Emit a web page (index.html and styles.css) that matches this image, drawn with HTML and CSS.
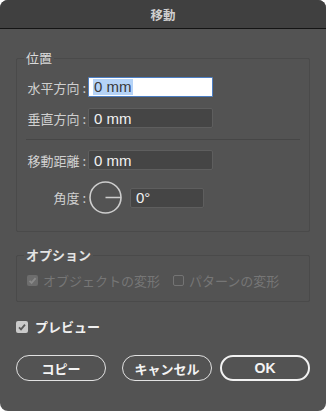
FILE: index.html
```html
<!DOCTYPE html>
<html>
<head>
  <meta charset="utf-8">
  <title>移動</title>
  <link rel="stylesheet" href="styles.css">
</head>
<body>
  <div class="window">
    <div class="titlebar">移動</div>

    <div class="content">
      <!-- 位置 -->
      <fieldset class="group position">
        <legend>位置</legend>

        <div class="row">
          <label class="label">水平方向 :</label>
          <div class="field focused"><span class="sel">0 mm</span></div>
        </div>

        <div class="row">
          <label class="label">垂直方向 :</label>
          <div class="field">0 mm</div>
        </div>

        <div class="divider"></div>

        <div class="row">
          <label class="label">移動距離 :</label>
          <div class="field">0 mm</div>
        </div>

        <div class="row angle-row">
          <label class="label">角度 :</label>
          <svg class="dial" width="33" height="33" viewBox="0 0 33 33">
            <circle cx="16.5" cy="16.5" r="15.5" fill="none" stroke="#cdcdcd" stroke-width="1.6"/>
            <line x1="16.5" y1="16.5" x2="32" y2="16.5" stroke="#cdcdcd" stroke-width="1.6"/>
          </svg>
          <div class="field small">0°</div>
        </div>
      </fieldset>

      <!-- オプション -->
      <fieldset class="group options">
        <legend>オプション</legend>
        <div class="checks">
          <span class="check disabled checked">
            <span class="box"><svg width="11" height="11" viewBox="0 0 11 11"><path d="M2.5 5.8 L4.6 7.9 L8.6 3.2" fill="none" stroke="#8a8a8a" stroke-width="1.8"/></svg></span>
            オブジェクトの変形
          </span>
          <span class="check disabled">
            <span class="box empty"></span>
            パターンの変形
          </span>
        </div>
      </fieldset>

      <div class="preview">
        <span class="check checked">
          <span class="box light"><svg width="12" height="12" viewBox="0 0 12 12"><path d="M3 6.3 L5 8.3 L9 3.6" fill="none" stroke="#5a5a5a" stroke-width="1.8"/></svg></span>
          プレビュー
        </span>
      </div>

      <div class="buttons">
        <button class="btn">コピー</button>
        <div class="btn-group">
          <button class="btn">キャンセル</button>
          <button class="btn primary">OK</button>
        </div>
      </div>
    </div>
  </div>
</body>
</html>
```

FILE: styles.css
```css
body {
  margin: 0;
  background-color: #ffffff;
}

.window {
  width: 326px;
  height: 411px;
  background-color: #535353;
  border-radius: 8px;
  overflow: hidden;
  font-family: "Noto Sans CJK JP", "Noto Sans", sans-serif;
  font-size: 13px;
  color: #d4d4d4;
}

.titlebar {
  height: 28px;
  background-color: #404040;
  border-bottom: 1px solid #141414;
  display: flex;
  align-items: center;
  justify-content: center;
  font-size: 12.5px;
  font-weight: bold;
  color: #cfcfcf;
}

.content {
  padding: 0 16px;
}

/* groups */
.group {
  margin: 0;
  padding: 0;
  border: 1px solid #4a4a4a;
  border-radius: 2px;
  min-width: 0;
}

.group legend {
  margin-left: 7px;
  padding: 0 2px;
  font-size: 13px;
  line-height: 12px;
  color: #dadada;
}

.position {
  margin-top: 23px;
  padding: 13px 0 17px;
}

.options {
  margin-top: 17px;
  padding: 13px 10px 15px;
}

.options legend {
  margin-left: -3px;
  font-weight: bold;
  color: #e4e4e4;
}

.row {
  display: flex;
  align-items: center;
  height: 20px;
  margin-bottom: 11px;
}

.row:last-child {
  margin-bottom: 0;
}

.label {
  width: 69px;
  margin-right: 2px;
  text-align: right;
  white-space: nowrap;
  font-size: 13px;
  color: #d0d0d0;
}

.field {
  box-sizing: border-box;
  width: 125px;
  height: 20px;
  padding: 0 5px;
  background-color: #454545;
  border: 1px solid #5e5e5e;
  border-radius: 2px;
  display: flex;
  align-items: center;
  font-family: "Liberation Sans", Arial, sans-serif;
  font-size: 15px;
  color: #f2f2f2;
}

.field.focused {
  background-color: #ffffff;
  border: 1px solid #4d7fc4;
  border-radius: 1px;
  padding-left: 4px;
  color: #3a3a3a;
}

.sel {
  background-color: #b5d3f7;
  padding: 0 1px;
  line-height: 16px;
}

.field.small {
  width: 74px;
  margin-left: 8px;
}

.divider {
  height: 1px;
  background-color: #464646;
  margin: 0 9px 10px;
}

.angle-row {
  height: 33px;
}

.dial {
  display: block;
  margin-left: 1px;
}

/* checkboxes */
.checks {
  display: flex;
  gap: 13px;
  height: 12px;
  align-items: center;
}

.check {
  display: flex;
  align-items: center;
  gap: 5px;
  white-space: nowrap;
}

.check.disabled {
  color: #767676;
}

.box {
  width: 11px;
  height: 11px;
  border-radius: 2px;
  background-color: #6d6d6d;
  display: flex;
  align-items: center;
  justify-content: center;
}

.box.empty {
  box-sizing: border-box;
  background-color: transparent;
  border: 1px solid #747474;
}

.box.light {
  width: 12px;
  height: 12px;
  background-color: #cacaca;
}

.preview {
  margin-top: 18px;
  height: 13px;
  display: flex;
  align-items: center;
}

.preview .check {
  gap: 7px;
  font-weight: bold;
  color: #f0f0f0;
}

/* buttons */
.buttons {
  margin-top: 22px;
  display: flex;
  justify-content: space-between;
}

.btn-group {
  display: flex;
  gap: 8px;
}

.btn {
  box-sizing: border-box;
  width: 90px;
  height: 26px;
  border: 1.3px solid #e2e2e2;
  border-radius: 13px;
  background: transparent;
  color: #f4f4f4;
  font-family: "Noto Sans CJK JP", sans-serif;
  font-size: 13px;
  font-weight: bold;
  padding: 0;
}

.btn.primary {
  border: 2px solid #f2f2f2;
  font-family: "Liberation Sans", Arial, sans-serif;
  font-size: 14px;
}
```
